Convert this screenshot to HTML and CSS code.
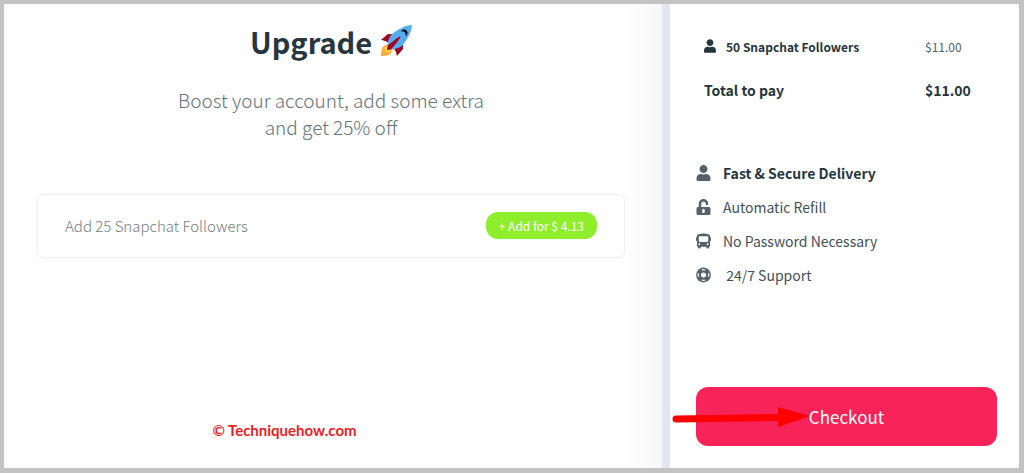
FILE: index.html
```html
<!DOCTYPE html>
<html lang="en">
<head>
<meta charset="utf-8">
<meta name="viewport" content="width=device-width, initial-scale=1">
<title>Upgrade</title>
<link rel="stylesheet" href="styles.css">
</head>
<body>
<svg class="sprite" aria-hidden="true">
  <symbol id="user" viewBox="0 0 448 512"><path d="M224 256c70.7 0 128-57.3 128-128S294.7 0 224 0 96 57.3 96 128s57.3 128 128 128zm89.6 32h-16.7c-22.2 10.2-46.9 16-72.9 16s-50.6-5.8-72.9-16h-16.7C60.2 288 0 348.2 0 422.4V464c0 26.5 21.5 48 48 48h352c26.5 0 48-21.5 48-48v-41.6c0-74.2-60.2-134.4-134.4-134.4z"/></symbol>
  <symbol id="unlock" viewBox="0 0 448 512"><path d="M400 256H152V152.9c0-39.6 31.7-72.5 71.3-72.9 40-.4 72.7 32.1 72.7 72v16c0 13.3 10.7 24 24 24h32c13.3 0 24-10.7 24-24v-16C376 68 307.5-.3 223.5 0 139.5.3 72 69.5 72 153.5V256H48c-26.5 0-48 21.5-48 48v160c0 26.5 21.5 48 48 48h352c26.5 0 48-21.5 48-48V304c0-26.5-21.5-48-48-48zM264 408c0 22.1-17.9 40-40 40s-40-17.9-40-40v-48c0-22.1 17.9-40 40-40s40 17.9 40 40v48z"/></symbol>
  <symbol id="bus" viewBox="0 0 512 512"><path d="M488 128h-8V80c0-44.8-99.2-80-224-80S32 35.2 32 80v48h-8c-13.25 0-24 10.74-24 24v80c0 13.25 10.75 24 24 24h8v160c0 17.67 14.33 32 32 32v32c0 17.67 14.33 32 32 32h32c17.67 0 32-14.33 32-32v-32h192v32c0 17.67 14.33 32 32 32h32c17.67 0 32-14.33 32-32v-32h6.4c16 0 25.6-12.8 25.6-25.6V256h8c13.25 0 24-10.75 24-24v-80c0-13.26-10.75-24-24-24zM112 400c-17.67 0-32-14.33-32-32s14.33-32 32-32 32 14.33 32 32-14.33 32-32 32zm16-112c-17.67 0-32-14.33-32-32V128c0-17.67 14.33-32 32-32h256c17.67 0 32 14.33 32 32v128c0 17.67-14.33 32-32 32H128zm272 112c-17.67 0-32-14.33-32-32s14.33-32 32-32 32 14.33 32 32-14.33 32-32 32z"/></symbol>
  <symbol id="ring" viewBox="0 0 512 512"><circle cx="256" cy="256" r="252"/><circle cx="256" cy="256" r="86" fill="#fff"/><g fill="none" stroke="#fff" stroke-width="40"><path d="M196 86a180 180 0 0 1 120 0M426 196a180 180 0 0 1 0 120M316 426a180 180 0 0 1-120 0M86 316a180 180 0 0 1 0-120"/></g></symbol>
</svg>
<div class="app">
  <main class="upgrade">
    <h1 class="title">Upgrade
      <svg class="rocket" viewBox="0 0 36 36" role="img" aria-label="rocket"><path fill="#A0041E" d="M1 17l8-7 16 1 1 16-7 8s.001-5.999-6-12-12-6-12-6z"/><path fill="#FFAC33" d="M.973 35s-.036-7.979 2.985-11S15 21.187 15 21.187 14.999 29 11.999 32c-3 3-11.026 3-11.026 3z"/><circle fill="#FFCC4D" cx="9" cy="27" r="4"/><path fill="#55ACEE" d="M35.999 0s-10 0-22 10c-6 5-6 14-4 16s11 2 16-4c10-12 10-22 10-22z"/><path d="M26.999 5c-1.623 0-3.013.971-3.641 2.36.502-.227 1.055-.36 1.641-.36 2.209 0 4 1.791 4 4 0 .586-.133 1.139-.359 1.64 1.389-.627 2.359-2.017 2.359-3.64 0-2.209-1.791-4-4-4z"/><path fill="#A0041E" d="M8 28s0-4 1-5 13.001-10.999 14-10-9.001 13-10.001 14S8 28 8 28z"/></svg>
    </h1>
    <p class="lead">Boost your account, add some extra<br>and get 25% off</p>
    <section class="offer">
      <span class="offer-name">Add 25 Snapchat Followers</span>
      <button class="add" type="button">+ Add for $ 4.13</button>
    </section>
    <footer class="credit">© Techniquehow.com</footer>
  </main>
  <aside class="summary">
    <table class="cart">
      <tbody>
        <tr class="item"><th scope="row"><span class="item-name"><svg class="icon-small" aria-hidden="true"><use href="#user"/></svg>50 Snapchat Followers</span></th><td>$11.00</td></tr>
        <tr class="total"><th scope="row">Total to pay</th><td>$11.00</td></tr>
      </tbody>
    </table>
    <ul class="features">
      <li class="strong"><svg class="icon" aria-hidden="true"><use href="#user"/></svg>Fast &amp; Secure Delivery</li>
      <li><svg class="icon" aria-hidden="true"><use href="#unlock"/></svg>Automatic Refill</li>
      <li><svg class="icon" aria-hidden="true"><use href="#bus"/></svg>No Password Necessary</li>
      <li><svg class="icon" aria-hidden="true"><use href="#ring"/></svg>&nbsp;24/7 Support</li>
    </ul>
    <div class="action">
      <button class="checkout" type="button">Checkout</button>
      <svg class="arrow" viewBox="0 0 140 24" aria-hidden="true"><path d="M5 14L108 12.500" stroke="#f00" stroke-width="7" stroke-linecap="round"/><path d="M107 2l32 9-32 11z" fill="#f00"/></svg>
    </div>
  </aside>
</div>
</body>
</html>
```
FILE: styles.css
```css
* {
  box-sizing: border-box;
}

body {
  margin: 0;
  min-height: 100vh;
  display: flex;
  padding: 4px 5px 5px 4px;
  background: #c3c3c3;
  color: #263640;
  font-family: "Noto Sans CJK SC", "Noto Sans", sans-serif;
  font-size: 14px;
}

.sprite {
  position: absolute;
  width: 0;
  height: 0;
}

.app {
  flex: 1;
  display: grid;
  grid-template-columns: minmax(0, 1fr) 357px;
  background: #fff;
}

.upgrade {
  display: flex;
  flex-direction: column;
  padding: 15px 37px 24px 33px;
  background: linear-gradient(to left, #f7f7f7, #fefefe 36px);
}

.title {
  display: flex;
  align-items: center;
  justify-content: center;
  gap: 8px;
  margin: 0;
  font-size: 29px;
  line-height: 44px;
}

.rocket {
  width: 32px;
  height: 32px;
}

.lead {
  margin: 23px 0 0;
  color: #66737a;
  font-size: 19px;
  font-weight: 300;
  line-height: 27px;
  text-align: center;
}

.offer {
  display: flex;
  align-items: center;
  justify-content: space-between;
  margin-top: 54px;
  padding: 17px 27px 18px;
  border: 1px solid #eee;
  border-radius: 6px;
  background: #fff;
}

.offer-name {
  color: #727d83;
  font-size: 15px;
  font-weight: 300;
}

.add {
  padding: 0 13px;
  border: 0;
  border-radius: 12px;
  background: #8fee2b;
  color: #fff;
  font: 12px/27px "Noto Sans CJK SC", "Noto Sans", sans-serif;
}

.credit {
  margin: auto 93px 0 0;
  color: #ee1c25;
  font: bold 15px/28px Lato, sans-serif;
  text-align: center;
}

.summary {
  display: flex;
  flex-direction: column;
  padding: 20px 22px 22px 26px;
  border-left: 8px solid #e2e6ee;
}

.cart {
  width: 100%;
  border-collapse: collapse;
}

.cart th,
.cart td {
  height: 44px;
  padding: 0 0 0 8px;
  text-align: left;
}

.cart td {
  width: 80px;
}

.item {
  font-size: 12px;
}

.item td {
  color: #52606a;
}

.total td {
  font-weight: bold;
}

.item-name {
  display: flex;
  align-items: center;
  gap: 10px;
}

.icon-small {
  width: 12px;
  height: 14px;
  fill: #263640;
}

.features {
  display: grid;
  gap: 1px;
  margin: 44px 0 0;
  padding: 0;
  list-style: none;
  color: #42515a;
}

.features li {
  display: flex;
  align-items: center;
  gap: 12px;
  height: 33px;
}

.features .strong {
  color: #263640;
  font-weight: bold;
}

.icon {
  width: 15px;
  height: 16px;
  fill: #55626b;
}

.action {
  position: relative;
  margin-top: auto;
}

.checkout {
  display: block;
  width: 100%;
  padding: 0;
  border: 0;
  border-radius: 12px;
  background: #f72359;
  color: #fff;
  font: 17px/59px "Noto Sans CJK SC", "Noto Sans", sans-serif;
}

.arrow {
  position: absolute;
  top: 18px;
  left: -25px;
  width: 140px;
  height: 24px;
}
```
